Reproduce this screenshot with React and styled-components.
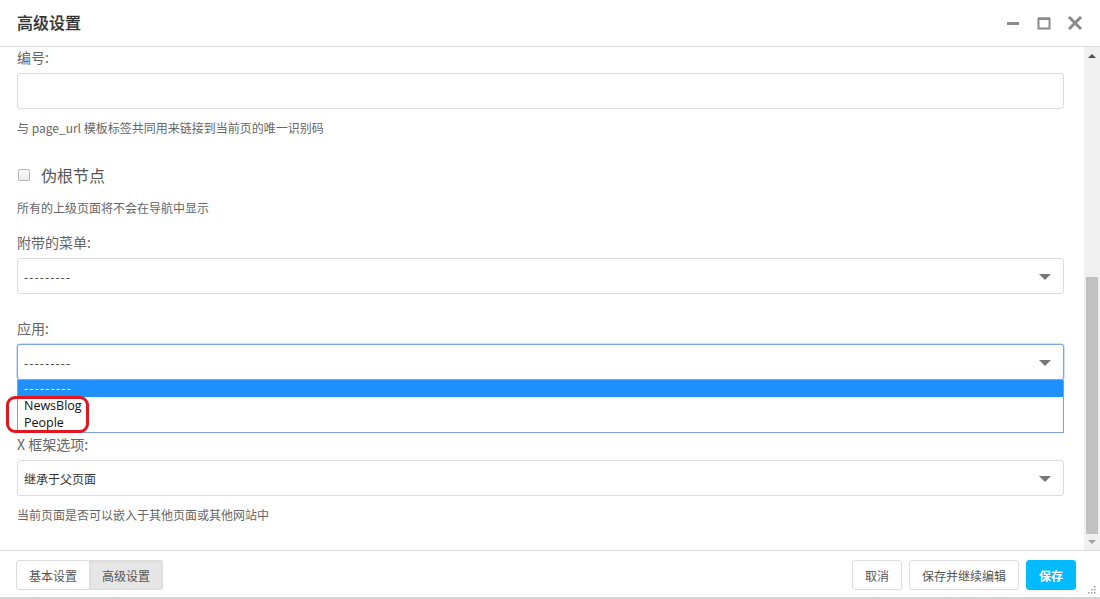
import React from "react";
import styled, { createGlobalStyle } from "styled-components";

const Global = createGlobalStyle`
  html, body { margin: 0; padding: 0; background: #fff; }
  body { font-family: "Liberation Sans", "Noto Sans CJK SC", sans-serif; color: #333; }
  * { box-sizing: border-box; }
`;

const Dialog = styled.div`
  width: 1100px;
  height: 599px;
  display: flex;
  flex-direction: column;
  background: #fff;
  position: relative;
  overflow: hidden;
  border-bottom: 2px solid #d2d2d2;
`;

const Header = styled.div`
  height: 47px;
  flex: none;
  display: flex;
  align-items: center;
  padding: 0 17px 2px 17px;
  border-bottom: 1px solid #ddd;
`;

const Title = styled.div`
  flex: 1;
  font-size: 16px;
  font-weight: 500;
  color: #333;
  line-height: 22px;
  font-family: "Noto Sans CJK SC", sans-serif;
  -webkit-text-stroke: 0.2px #333;
`;

const Controls = styled.div`
  display: flex;
  align-items: center;
  gap: 17px;
  margin-right: 1px;
  padding-top: 2px;
`;

const CtrlIcon = styled.svg`
  display: block;
  width: 14px;
  height: 14px;
`;

const Body = styled.div`
  flex: 1;
  min-height: 0;
  display: flex;
`;

const Content = styled.div`
  flex: 1;
  padding: 0 20px 0 17px;
  overflow: hidden;
`;

const Label = styled.div`
  font-size: 14px;
  line-height: 20px;
  height: 20px;
  color: #666;
  margin-top: ${(p) => p.$mt || 0}px;
  margin-bottom: 6px;
  font-family: "Noto Sans CJK SC", sans-serif;
`;

const Input = styled.div`
  height: 36px;
  border: 1px solid #ddd;
  border-radius: 3px;
  background: #fff;
`;

const Help = styled.div`
  font-size: 12px;
  line-height: 18px;
  color: #666;
  margin-top: ${(p) => p.$mt || 10}px;
  font-family: "Noto Sans CJK SC", sans-serif;
`;

const CheckRow = styled.div`
  display: flex;
  align-items: center;
  height: 24px;
  margin-top: 26px;
`;

const CheckBox = styled.span`
  width: 12px;
  height: 12px;
  border: 1px solid #b4b4b4;
  border-radius: 2px;
  background: linear-gradient(#fdfdfd, #ececec);
  margin-left: 1px;
  margin-right: 11px;
`;

const CheckLabel = styled.span`
  font-size: 16px;
  color: #555;
  line-height: 24px;
  font-family: "Noto Sans CJK SC", sans-serif;
`;

const SelectWrap = styled.div`
  position: relative;
`;

const Select = styled.div`
  height: 36px;
  border: 1px solid ${(p) => (p.$focus ? "#7fa3dc" : "#ddd")};
  border-radius: 3px;
  display: flex;
  align-items: center;
  padding: 0 12px 0 6px;
  font-size: 12px;
  color: #333;
  background: #fff;
  font-family: "Noto Sans CJK SC", sans-serif;
  box-shadow: ${(p) => (p.$focus ? "0 0 0 0.5px #a9c2ea" : "none")};
`;

const SelectText = styled.span`
  flex: 1;
  letter-spacing: ${(p) => (p.$dashes ? "1.1px" : "0")};
`;

const Caret = styled.span`
  width: 0;
  height: 0;
  border-left: 6px solid transparent;
  border-right: 6px solid transparent;
  border-top: 6px solid #777;
  margin-top: 1px;
`;

const DropList = styled.div`
  position: absolute;
  left: 0;
  right: 0;
  top: 100%;
  height: 53px;
  border: 1px solid #7f9fd6;
  border-top: none;
  background: #fff;
  z-index: 2;
  font-family: "Open Sans", "Noto Sans", sans-serif;
  font-size: 12.5px;
`;

const Option = styled.div`
  height: 17px;
  line-height: 17px;
  padding-left: 6px;
  color: ${(p) => (p.$active ? "#fff" : "#111")};
  background: ${(p) => (p.$active ? "#1e90ff" : "transparent")};
  letter-spacing: ${(p) => (p.$dashes ? "1.3px" : "0")};
`;

const Annotation = styled.div`
  position: absolute;
  left: -11px;
  top: 52px;
  width: 83px;
  height: 37px;
  border: 3px solid #e3151f;
  border-radius: 9px;
  z-index: 3;
  pointer-events: none;
`;

const ScrollBar = styled.div`
  width: 16px;
  flex: none;
  background: #f0f0f0;
  display: flex;
  flex-direction: column;
`;

const ScrollArrow = styled.div`
  height: ${(p) => p.$h}px;
  flex: none;
  display: flex;
  align-items: center;
  justify-content: center;
`;

const Tri = styled.span`
  width: 0;
  height: 0;
  border-left: 4px solid transparent;
  border-right: 4px solid transparent;
  ${(p) => (p.$up ? "border-bottom: 4px solid #505050;" : "border-top: 4px solid #a3a3a3;")}
`;

const Track = styled.div`
  flex: 1;
  display: flex;
  flex-direction: column;
  justify-content: flex-end;
`;

const Thumb = styled.div`
  height: 257px;
  margin: 0 2px;
  background: #c1c1c1;
`;

const Footer = styled.div`
  height: 47px;
  flex: none;
  border-top: 1px solid #ddd;
  display: flex;
  align-items: flex-start;
  padding: 9px 24px 0 16px;
  position: relative;
`;

const Group = styled.div`
  display: flex;
  flex: 1;
`;

const Btn = styled.button`
  height: 30px;
  padding: 0 ${(p) => p.$px || 12}px;
  font-size: 12px;
  font-family: "Noto Sans CJK SC", sans-serif;
  border: 1px solid ${(p) => (p.$primary ? "#00bbff" : "#ddd")};
  background: ${(p) => (p.$primary ? "#00bbff" : p.$active ? "#e6e6e6" : "#fff")};
  color: ${(p) => (p.$primary ? "#fff" : "#555")};
  font-weight: ${(p) => (p.$primary ? 700 : 400)};
  border-radius: 3px;
  box-shadow: ${(p) => (p.$active ? "inset 0 1px 2px rgba(0,0,0,0.08)" : "none")};
  cursor: pointer;
`;

const SegBtn = styled(Btn)`
  border-radius: ${(p) => (p.$first ? "3px 0 0 3px" : "0 3px 3px 0")};
  ${(p) => (p.$first ? "" : "border-left: none;")}
`;

const RightGroup = styled.div`
  display: flex;
  gap: 7px;
`;

const Grip = styled.svg`
  position: absolute;
  right: 3px;
  bottom: 2px;
  width: 10px;
  height: 10px;
`;

export default function App() {
  return (
    <>
      <Global />
      <Dialog>
        <Header>
          <Title>高级设置</Title>
          <Controls>
            <CtrlIcon viewBox="0 0 14 14">
              <rect x="1" y="6" width="12" height="3" fill="#8a8a8a" />
            </CtrlIcon>
            <CtrlIcon viewBox="0 0 14 14">
              <rect x="1.5" y="2.5" width="11" height="10" fill="none" stroke="#8a8a8a" strokeWidth="2" />
              <rect x="1" y="1.5" width="12" height="2.5" fill="#8a8a8a" />
            </CtrlIcon>
            <CtrlIcon viewBox="0 0 14 14">
              <path d="M2 2 L12 12 M12 2 L2 12" stroke="#8a8a8a" strokeWidth="3" strokeLinecap="square" />
            </CtrlIcon>
          </Controls>
        </Header>
        <Body>
          <Content>
            <Label>编号:</Label>
            <Input />
            <Help>与 page_url 模板标签共同用来链接到当前页的唯一识别码</Help>

            <CheckRow>
              <CheckBox />
              <CheckLabel>伪根节点</CheckLabel>
            </CheckRow>
            <Help $mt={12}>所有的上级页面将不会在导航中显示</Help>

            <Label $mt={15}>附带的菜单:</Label>
            <Select>
              <SelectText $dashes>---------</SelectText>
              <Caret />
            </Select>

            <Label $mt={24}>应用:</Label>
            <SelectWrap>
              <Select $focus>
                <SelectText $dashes>---------</SelectText>
                <Caret />
              </Select>
              <DropList>
                <Option $active $dashes>---------</Option>
                <Option>NewsBlog</Option>
                <Option>People</Option>
              </DropList>
              <Annotation />
            </SelectWrap>

            <Label $mt={54}>X 框架选项:</Label>
            <Select>
              <SelectText>继承于父页面</SelectText>
              <Caret />
            </Select>
            <Help>当前页面是否可以嵌入于其他页面或其他网站中</Help>
          </Content>
          <ScrollBar>
            <ScrollArrow $h={17}>
              <Tri $up />
            </ScrollArrow>
            <Track>
              <Thumb />
            </Track>
            <ScrollArrow $h={16}>
              <Tri />
            </ScrollArrow>
          </ScrollBar>
        </Body>
        <Footer>
          <Group>
            <SegBtn $first>基本设置</SegBtn>
            <SegBtn $active>高级设置</SegBtn>
          </Group>
          <RightGroup>
            <Btn>取消</Btn>
            <Btn>保存并继续编辑</Btn>
            <Btn $primary>保存</Btn>
          </RightGroup>
          <Grip viewBox="0 0 10 10">
            {[
              [8, 2],
              [5, 5],
              [8, 5],
              [2, 8],
              [5, 8],
              [8, 8],
            ].map(([x, y], i) => (
              <rect key={i} x={x - 1} y={y - 1} width="1.5" height="1.5" fill="#9a9a9a" />
            ))}
          </Grip>
        </Footer>
      </Dialog>
    </>
  );
}
